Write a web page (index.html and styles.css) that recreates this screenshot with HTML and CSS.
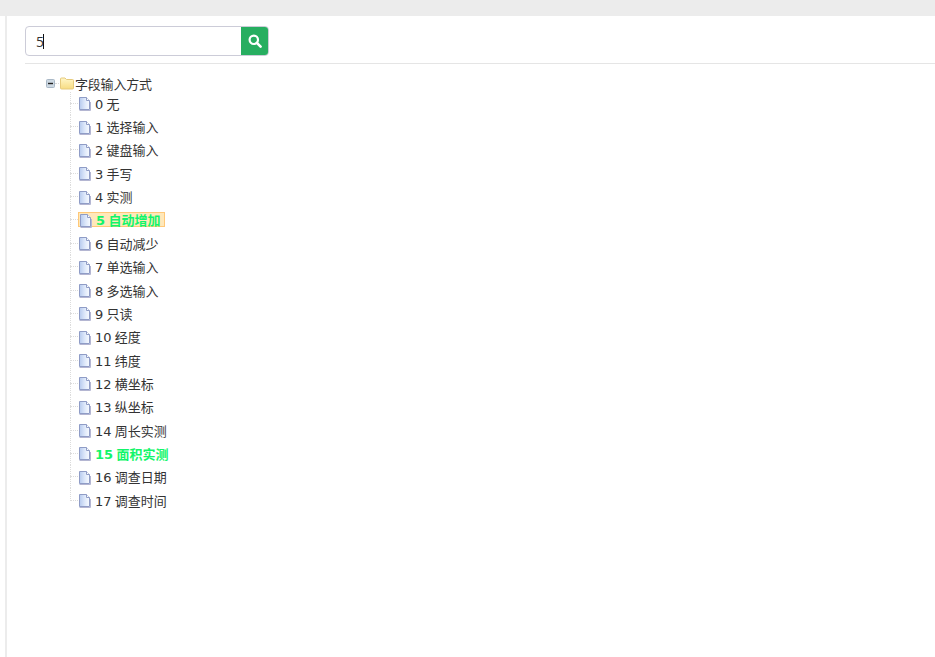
FILE: index.html
```html
<!DOCTYPE html>
<html lang="zh">
<head>
<meta charset="utf-8">
<title>字段输入方式</title>
<link rel="stylesheet" href="styles.css">
</head>
<body>
<svg class="defs" width="0" height="0"><defs>
  <linearGradient id="docfill" x1="0" y1="0" x2="1" y2="0"><stop offset="0" stop-color="#b6caee"/><stop offset=".55" stop-color="#dfe9fa"/><stop offset="1" stop-color="#f8fbff"/></linearGradient>
  <linearGradient id="folderfill" x1="0" y1="0" x2="0" y2="1"><stop offset="0" stop-color="#fff6c8"/><stop offset="1" stop-color="#f7dc82"/></linearGradient>
  <g id="doc"><path d="M1.5 .5h7l3 3v9h-10z" fill="url(#docfill)" stroke="#8f9cc6"/><path d="M8.5 .5v3h3" fill="#fff" stroke="#8f9cc6"/><path d="M1.5 13.5h11V5" fill="none" stroke="#b4b6d2"/></g>
</defs></svg>
<div class="topbar"></div>
<div class="layout">
  <div class="gutter"></div>
  <main class="content">
    <div class="searchbar">
      <div class="search">
        <div class="search-input"><span class="typed">5</span><span class="caret"></span></div>
        <button class="search-btn" aria-label="搜索">
          <svg width="14" height="14" viewBox="0 0 14 14"><circle cx="5.8" cy="5.8" r="4.2" fill="none" stroke="#fff" stroke-width="2.2"/><path d="M8.9 8.9 12.6 12.6" stroke="#fff" stroke-width="2.6" stroke-linecap="round"/></svg>
        </button>
      </div>
    </div>
    <div class="tree">
      <div class="root">
        <svg class="toggle" width="9" height="9" viewBox="0 0 9 9"><rect x=".5" y=".5" width="8" height="8" rx="1" fill="#cdd8e2" stroke="#a9b8c6"/><path d="M2 4.5h5" stroke="#222" stroke-width="1.4"/></svg>
        <span class="dots-h short"></span>
        <svg class="icon" width="16" height="16" viewBox="0 0 16 16"><path d="M1.5 13V4a1 1 0 0 1 1-1h3.5l1.5 1.5h6a1 1 0 0 1 1 1V13a1 1 0 0 1-1 1h-11a1 1 0 0 1-1-1z" fill="url(#folderfill)" stroke="#e6ca7c"/></svg>
        <span class="root-label">字段输入方式</span>
      </div>
      <ul class="items">
        <li class="item"><span class="dots-h"></span><svg class="doc" width="13" height="14" viewBox="0 0 13 14"><use href="#doc"/></svg><span class="label">0 无</span></li>
        <li class="item"><span class="dots-h"></span><svg class="doc" width="13" height="14" viewBox="0 0 13 14"><use href="#doc"/></svg><span class="label">1 选择输入</span></li>
        <li class="item"><span class="dots-h"></span><svg class="doc" width="13" height="14" viewBox="0 0 13 14"><use href="#doc"/></svg><span class="label">2 键盘输入</span></li>
        <li class="item"><span class="dots-h"></span><svg class="doc" width="13" height="14" viewBox="0 0 13 14"><use href="#doc"/></svg><span class="label">3 手写</span></li>
        <li class="item"><span class="dots-h"></span><svg class="doc" width="13" height="14" viewBox="0 0 13 14"><use href="#doc"/></svg><span class="label">4 实测</span></li>
        <li class="item"><span class="dots-h"></span><span class="selected"><svg class="doc" width="13" height="14" viewBox="0 0 13 14"><use href="#doc"/></svg><span class="label match">5 自动增加</span></span></li>
        <li class="item"><span class="dots-h"></span><svg class="doc" width="13" height="14" viewBox="0 0 13 14"><use href="#doc"/></svg><span class="label">6 自动减少</span></li>
        <li class="item"><span class="dots-h"></span><svg class="doc" width="13" height="14" viewBox="0 0 13 14"><use href="#doc"/></svg><span class="label">7 单选输入</span></li>
        <li class="item"><span class="dots-h"></span><svg class="doc" width="13" height="14" viewBox="0 0 13 14"><use href="#doc"/></svg><span class="label">8 多选输入</span></li>
        <li class="item"><span class="dots-h"></span><svg class="doc" width="13" height="14" viewBox="0 0 13 14"><use href="#doc"/></svg><span class="label">9 只读</span></li>
        <li class="item"><span class="dots-h"></span><svg class="doc" width="13" height="14" viewBox="0 0 13 14"><use href="#doc"/></svg><span class="label">10 经度</span></li>
        <li class="item"><span class="dots-h"></span><svg class="doc" width="13" height="14" viewBox="0 0 13 14"><use href="#doc"/></svg><span class="label">11 纬度</span></li>
        <li class="item"><span class="dots-h"></span><svg class="doc" width="13" height="14" viewBox="0 0 13 14"><use href="#doc"/></svg><span class="label">12 横坐标</span></li>
        <li class="item"><span class="dots-h"></span><svg class="doc" width="13" height="14" viewBox="0 0 13 14"><use href="#doc"/></svg><span class="label">13 纵坐标</span></li>
        <li class="item"><span class="dots-h"></span><svg class="doc" width="13" height="14" viewBox="0 0 13 14"><use href="#doc"/></svg><span class="label">14 周长实测</span></li>
        <li class="item"><span class="dots-h"></span><svg class="doc" width="13" height="14" viewBox="0 0 13 14"><use href="#doc"/></svg><span class="label match">15 面积实测</span></li>
        <li class="item"><span class="dots-h"></span><svg class="doc" width="13" height="14" viewBox="0 0 13 14"><use href="#doc"/></svg><span class="label">16 调查日期</span></li>
        <li class="item last"><span class="dots-h"></span><svg class="doc" width="13" height="14" viewBox="0 0 13 14"><use href="#doc"/></svg><span class="label">17 调查时间</span></li>
      </ul>
    </div>
  </main>
</div>
</body>
</html>
```
FILE: styles.css
```css
* { box-sizing: border-box; }
html, body { margin: 0; height: 100%; }
body { background: #fff; font-family: "DejaVu Sans", "Noto Sans CJK SC", sans-serif; font-size: 13px; color: #333; overflow: hidden; }
.defs { position: absolute; }
.topbar { height: 16px; background: #ececec; }
.layout { display: flex; height: 641px; }
.gutter { width: 7px; border-right: 2px solid #ececec; flex: none; }
.content { flex: 1; min-width: 0; padding-left: 18px; }
.searchbar { height: 48px; padding-top: 10px; border-bottom: 1px solid #e5e5e5; }
.search { display: flex; width: 244px; height: 30px; border: 1px solid #ccccd8; border-radius: 4px; overflow: hidden; }
.search-input { flex: 1; display: flex; align-items: center; padding-left: 10px; font-family: "Open Sans", sans-serif; font-size: 14px; color: #333; }
.caret { width: 1px; height: 15px; margin-left: -1px; background: #111; }
.search-btn { width: 27px; padding: 0; border: 0; background: #27ae60; display: flex; align-items: center; justify-content: center; }
.tree { padding: 11px 0 0 21px; }
.root { display: flex; align-items: center; height: 16.6px; }
.toggle { flex: none; }
.icon { flex: none; display: block; }
.doc { flex: none; display: block; margin-top: 2px; }
.dots-h { flex: none; width: 8px; height: 0; border-top: 1px dotted #dcdcdc; }
.dots-h.short { width: 4px; }
.root-label { letter-spacing: -.2px; }
.items { list-style: none; margin: 0; padding: 0 0 0 24px; }
.item { display: flex; align-items: center; height: 23.35px; background: repeating-linear-gradient(to bottom, #dcdcdc 0 1px, transparent 1px 2px) left top / 1px 100% no-repeat; }
.item.last { background-size: 1px 12px; }
.label { padding-left: 4px; white-space: nowrap; word-spacing: -1px; }
.match { color: #12f56a; font-weight: 700; }
.selected { display: flex; align-items: center; height: 15px; padding-right: 3px; background: #ffe8ba; border: 1px solid #ffc878; }
```
